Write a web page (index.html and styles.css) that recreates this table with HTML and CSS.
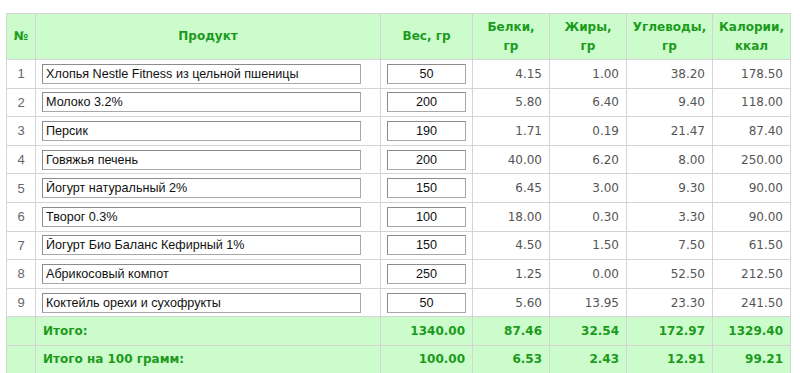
FILE: index.html
```html
<!DOCTYPE html>
<html lang="ru">
<head>
<meta charset="utf-8">
<title>Калькулятор калорий</title>
<link rel="stylesheet" href="styles.css">
</head>
<body>
<table class="calc">
  <colgroup>
    <col class="c-num"><col class="c-prod"><col class="c-w"><col class="c-p"><col class="c-f"><col class="c-c"><col class="c-k">
  </colgroup>
  <thead>
    <tr>
      <th>№</th>
      <th>Продукт</th>
      <th>Вес, гр</th>
      <th>Белки,<br>гр</th>
      <th>Жиры,<br>гр</th>
      <th>Углеводы,<br>гр</th>
      <th>Калории,<br>ккал</th>
    </tr>
  </thead>
  <tbody>
    <tr><td class="num">1</td><td class="prod"><input class="in-prod" type="text" value="Хлопья Nestle Fitness из цельной пшеницы"></td><td class="wt"><input class="in-w" type="text" value="50"></td><td class="val">4.15</td><td class="val">1.00</td><td class="val">38.20</td><td class="val">178.50</td></tr>
    <tr><td class="num">2</td><td class="prod"><input class="in-prod" type="text" value="Молоко 3.2%"></td><td class="wt"><input class="in-w" type="text" value="200"></td><td class="val">5.80</td><td class="val">6.40</td><td class="val">9.40</td><td class="val">118.00</td></tr>
    <tr><td class="num">3</td><td class="prod"><input class="in-prod" type="text" value="Персик"></td><td class="wt"><input class="in-w" type="text" value="190"></td><td class="val">1.71</td><td class="val">0.19</td><td class="val">21.47</td><td class="val">87.40</td></tr>
    <tr><td class="num">4</td><td class="prod"><input class="in-prod" type="text" value="Говяжья печень"></td><td class="wt"><input class="in-w" type="text" value="200"></td><td class="val">40.00</td><td class="val">6.20</td><td class="val">8.00</td><td class="val">250.00</td></tr>
    <tr><td class="num">5</td><td class="prod"><input class="in-prod" type="text" value="Йогурт натуральный 2%"></td><td class="wt"><input class="in-w" type="text" value="150"></td><td class="val">6.45</td><td class="val">3.00</td><td class="val">9.30</td><td class="val">90.00</td></tr>
    <tr><td class="num">6</td><td class="prod"><input class="in-prod" type="text" value="Творог 0.3%"></td><td class="wt"><input class="in-w" type="text" value="100"></td><td class="val">18.00</td><td class="val">0.30</td><td class="val">3.30</td><td class="val">90.00</td></tr>
    <tr><td class="num">7</td><td class="prod"><input class="in-prod" type="text" value="Йогурт Био Баланс Кефирный 1%"></td><td class="wt"><input class="in-w" type="text" value="150"></td><td class="val">4.50</td><td class="val">1.50</td><td class="val">7.50</td><td class="val">61.50</td></tr>
    <tr><td class="num">8</td><td class="prod"><input class="in-prod" type="text" value="Абрикосовый компот"></td><td class="wt"><input class="in-w" type="text" value="250"></td><td class="val">1.25</td><td class="val">0.00</td><td class="val">52.50</td><td class="val">212.50</td></tr>
    <tr><td class="num">9</td><td class="prod"><input class="in-prod" type="text" value="Коктейль орехи и сухофрукты"></td><td class="wt"><input class="in-w" type="text" value="50"></td><td class="val">5.60</td><td class="val">13.95</td><td class="val">23.30</td><td class="val">241.50</td></tr>
  </tbody>
  <tfoot>
    <tr class="total"><td></td><td class="label">Итого:</td><td class="val">1340.00</td><td class="val">87.46</td><td class="val">32.54</td><td class="val">172.97</td><td class="val">1329.40</td></tr>
    <tr class="total"><td></td><td class="label">Итого на 100 грамм:</td><td class="val">100.00</td><td class="val">6.53</td><td class="val">2.43</td><td class="val">12.91</td><td class="val">99.21</td></tr>
  </tfoot>
</table>
</body>
</html>
```

FILE: styles.css
```css
html, body {
  margin: 0;
  padding: 0;
  background: #ffffff;
}
body {
  padding: 13px 0 0 6px;
  font-family: "DejaVu Sans", Verdana, sans-serif;
}
.calc {
  border-collapse: collapse;
  table-layout: fixed;
  width: 784px;
}
.c-num { width: 29px; }
.c-prod { width: 345px; }
.c-w { width: 92px; }
.c-p { width: 77px; }
.c-f { width: 77px; }
.c-c { width: 86px; }
.c-k { width: 78px; }

.calc th,
.calc td {
  border: 1px solid #d4d4d4;
  padding: 0 7px;
}
.calc thead th {
  background: #ccfccc;
  color: #1c9a1c;
  font-size: 12px;
  font-weight: bold;
  line-height: 19px;
  height: 45px;
  text-align: center;
  vertical-align: middle;
  padding: 0 4px;
}
.calc tbody tr {
  height: 28.6px;
}
.calc tbody td {
  font-size: 12px;
  color: #555555;
}
.calc td.num {
  text-align: center;
  font-family: "Liberation Sans", Arial, sans-serif;
  font-size: 13px;
  color: #666666;
  padding: 0;
}
.calc td.prod,
.calc td.wt {
  padding: 0 6px 0 6px;
}
.calc td.val {
  text-align: right;
  padding-right: 7px;
}
.in-prod,
.in-w {
  box-sizing: border-box;
  height: 20px;
  margin: 0;
  padding: 0 3px;
  border: 1px solid #a8a8a8;
  border-top-color: #8c8c8c;
  border-left-color: #8c8c8c;
  background: #ffffff;
  font-family: "Liberation Sans", Arial, sans-serif;
  font-size: 12.6px;
  color: #111111;
  display: block;
}
.in-prod {
  width: 319px;
}
.in-w {
  width: 79px;
  text-align: center;
}
.calc tfoot tr {
  height: 28.3px;
}
.calc tfoot td {
  background: #ccfccc;
  color: #1c9a1c;
  font-size: 12px;
  font-weight: bold;
}
.calc tfoot td.label {
  text-align: left;
  padding-left: 7px;
}
```
